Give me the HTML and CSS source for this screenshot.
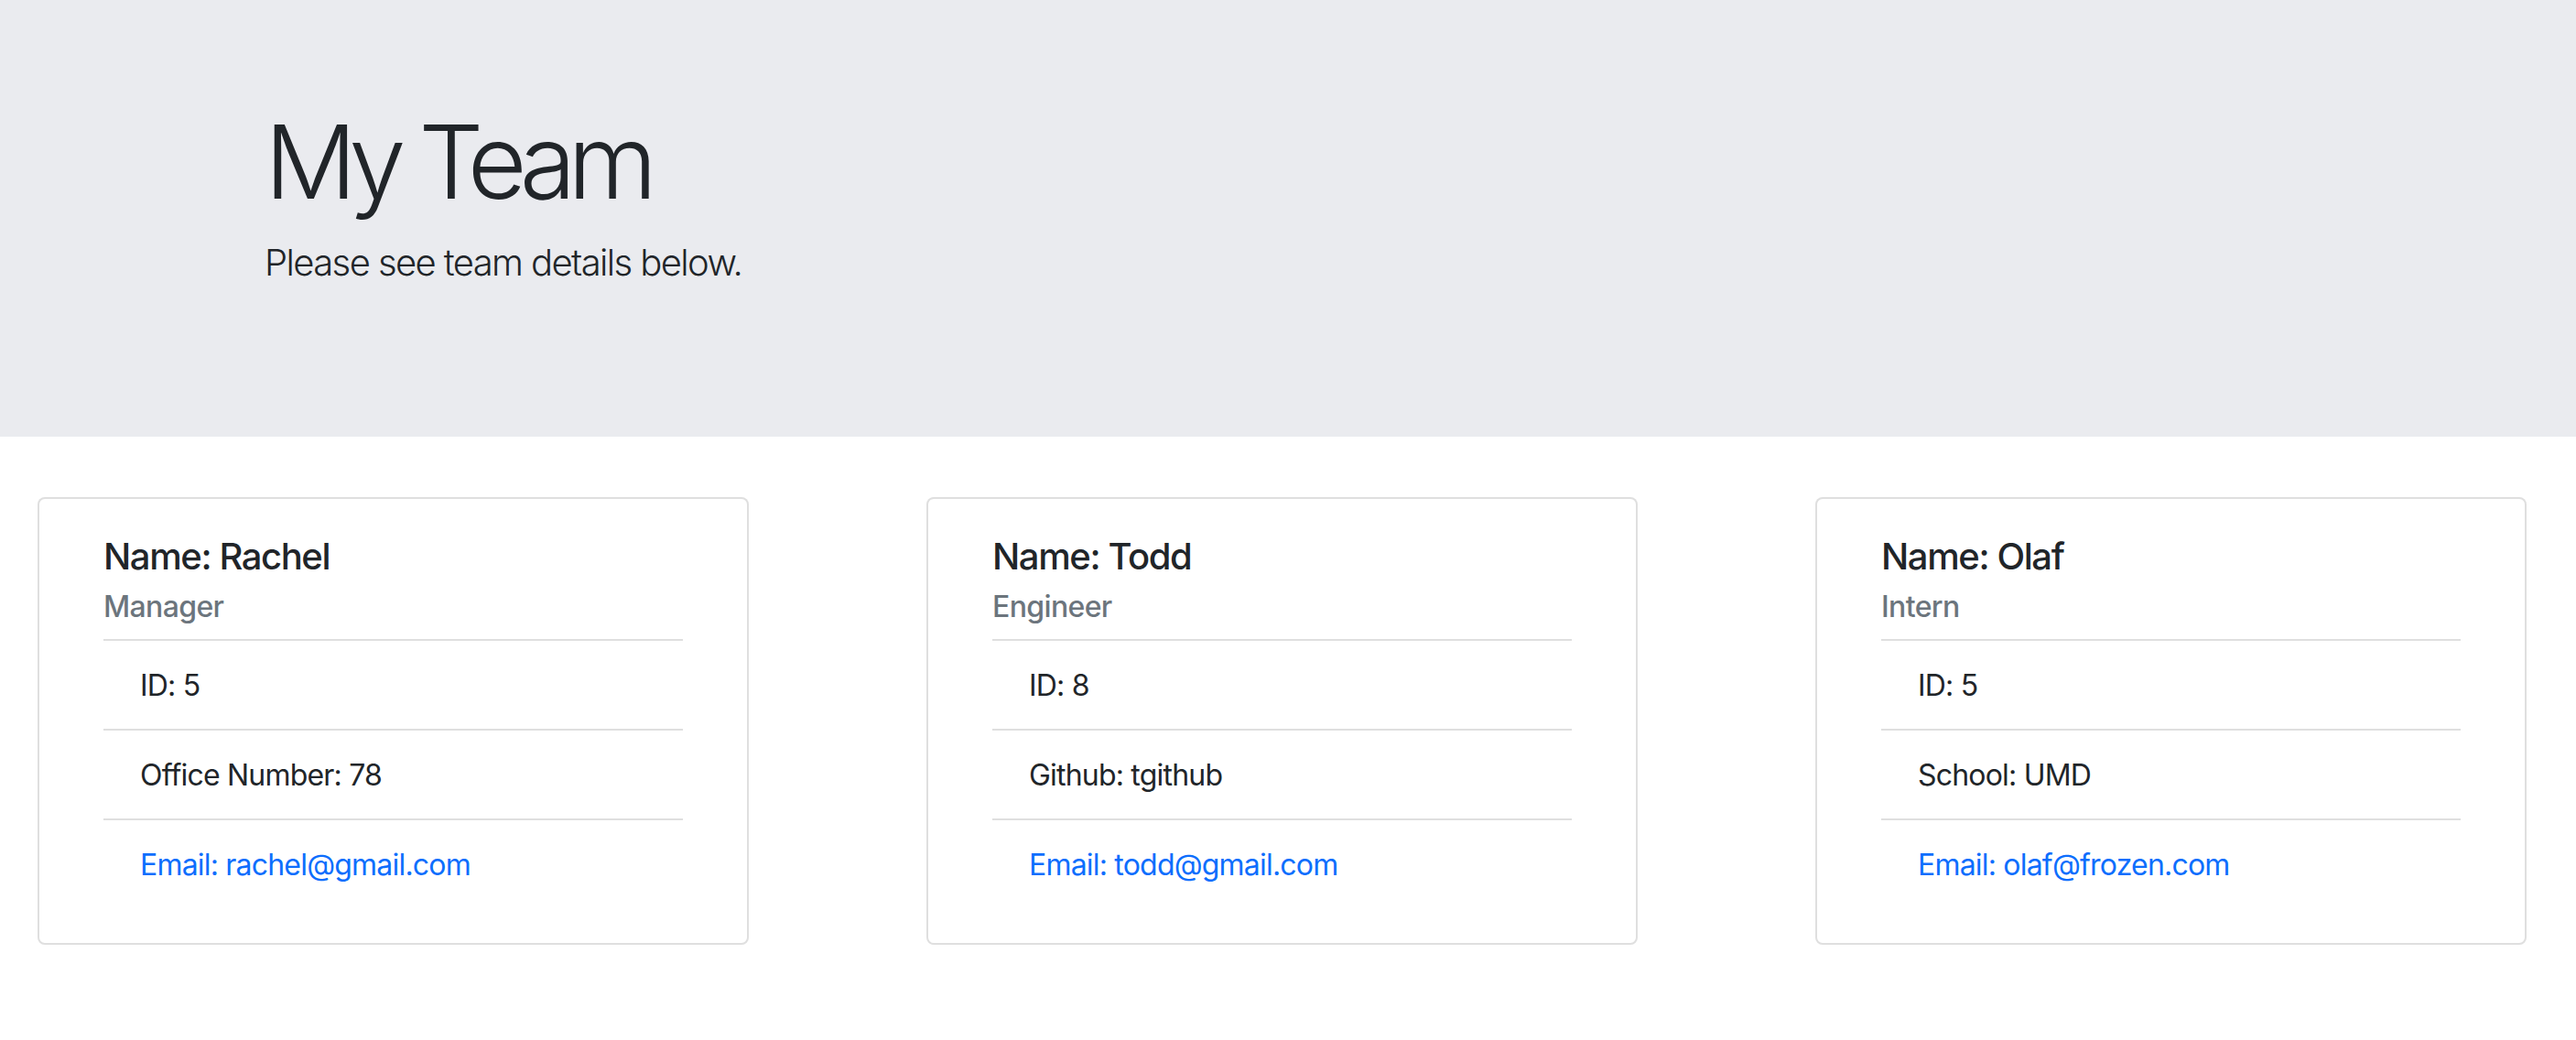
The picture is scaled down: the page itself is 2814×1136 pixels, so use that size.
FILE: index.html
```html
<!DOCTYPE html>
<html lang="en">
<head>
<meta charset="utf-8">
<title>My Team</title>
<link rel="stylesheet" href="styles.css">
</head>
<body>
<header class="jumbotron">
  <div class="jumbo-inner">
    <h1 class="title">My Team</h1>
    <p class="lead">Please see team details below.</p>
  </div>
</header>
<main class="team">
  <section class="card">
    <div class="card-body">
      <h5 class="card-title">Name: Rachel</h5>
      <h6 class="card-subtitle">Manager</h6>
      <ul class="list">
        <li class="item">ID: 5</li>
        <li class="item">Office Number: 78</li>
        <li class="item item-link">Email: rachel@gmail.com</li>
      </ul>
    </div>
  </section>
  <section class="card">
    <div class="card-body">
      <h5 class="card-title">Name: Todd</h5>
      <h6 class="card-subtitle">Engineer</h6>
      <ul class="list">
        <li class="item">ID: 8</li>
        <li class="item">Github: tgithub</li>
        <li class="item item-link">Email: todd@gmail.com</li>
      </ul>
    </div>
  </section>
  <section class="card">
    <div class="card-body">
      <h5 class="card-title">Name: Olaf</h5>
      <h6 class="card-subtitle">Intern</h6>
      <ul class="list">
        <li class="item">ID: 5</li>
        <li class="item">School: UMD</li>
        <li class="item item-link">Email: olaf@frozen.com</li>
      </ul>
    </div>
  </section>
</main>
</body>
</html>
```

FILE: styles.css
```css
* {
  box-sizing: border-box;
}

html, body {
  margin: 0;
  padding: 0;
  background: #ffffff;
}

body {
  font-family: Inter, "Liberation Sans", sans-serif;
  color: #212529;
  font-size: 32px;
  line-height: 1.5;
  letter-spacing: -0.025em;
}

.jumbotron {
  background: #eaebef;
  height: 477px;
  margin: 0 0 66px 0;
  padding: 109px 0 0 0;
}

.jumbo-inner {
  padding-left: 289px;
}

.title {
  margin: 0 0 14px 0;
  font-size: 112px;
  font-weight: 300;
  line-height: 1.2;
  letter-spacing: -0.08em;
}

.lead {
  margin: 0;
  font-size: 40px;
  font-weight: 300;
  line-height: 60px;
  letter-spacing: -0.04em;
}

.team {
  display: flex;
  gap: 194px;
  padding-left: 41px;
}

.card {
  width: 777px;
  border: 2px solid rgba(0, 0, 0, 0.125);
  border-radius: 8px;
  background: #fff;
}

.card-body {
  padding: 39px 70px 38px;
}

.card-title {
  margin: 0 0 12px 0;
  font-size: 40px;
  font-weight: 500;
  line-height: 48px;
  letter-spacing: -0.035em;
}

.card-subtitle {
  margin: 0 0 16px 0;
  font-size: 32px;
  font-weight: 500;
  line-height: 38.4px;
  color: #6c757d;
  letter-spacing: -0.02em;
}

.list {
  list-style: none;
  margin: 0;
  padding: 0;
}

.item {
  border-top: 2px solid rgba(0, 0, 0, 0.125);
  padding: 25px 40px 23px;
  line-height: 48px;
}

.item-link {
  color: #0d6efd;
}
```
